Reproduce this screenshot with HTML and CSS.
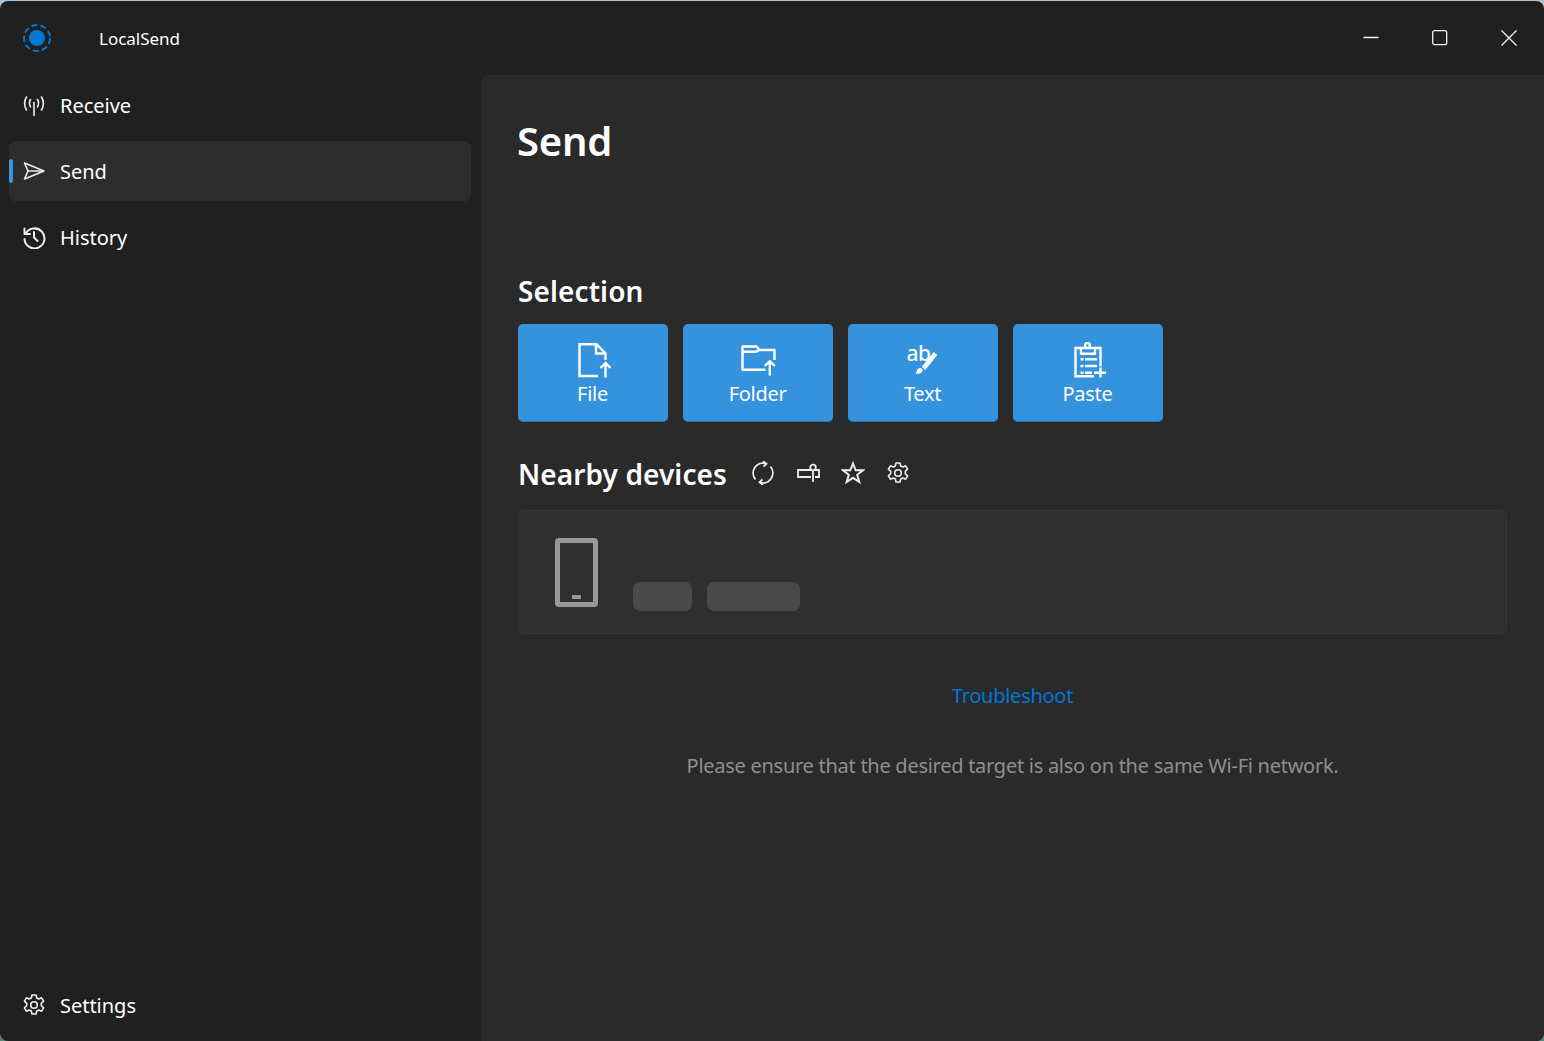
FILE: index.html
```html
<!DOCTYPE html>
<html lang="en">
<head>
<meta charset="utf-8">
<title>LocalSend</title>
<link rel="stylesheet" href="styles.css">
</head>
<body>
<div class="window">
  <header class="titlebar">
    <div class="brand">
      <svg class="logo" width="30" height="30" viewBox="0 0 30 30"><circle cx="15" cy="15" r="13" fill="none" stroke="#0078d4" stroke-width="2" stroke-dasharray="6 3.2"/><circle cx="15" cy="15" r="8" fill="#0078d4"/></svg>
      <span class="app-name">LocalSend</span>
    </div>
    <div class="controls">
      <svg width="16" height="16" viewBox="0 0 16 16" class="ctl"><path d="M0.500 7.500H15.500" stroke="#f2f2f2" stroke-width="1.300" fill="none"/></svg>
      <svg width="16" height="16" viewBox="0 0 16 16" class="ctl"><rect x="0.700" y="0.700" width="14" height="14" rx="2" stroke="#f2f2f2" stroke-width="1.300" fill="none"/></svg>
      <svg width="16" height="16" viewBox="0 0 16 16" class="ctl"><path d="M0.500 0.500L15.500 15.500M15.500 0.500L0.500 15.500" stroke="#f2f2f2" stroke-width="1.300" fill="none"/></svg>
    </div>
  </header>
  <div class="body">
    <nav class="sidebar">
      <div class="nav-top">
        <a class="nav-item">
          <svg class="nav-icon" width="24" height="24" viewBox="0 0 24 24" fill="none" stroke="#eee" stroke-width="1.600" stroke-linecap="round"><path d="M12 9.500V22.500"/><path d="M8.500 6.500c-1.400 2.400-1.400 5 0 7.400"/><path d="M15.500 6.500c1.400 2.400 1.400 5 0 7.400"/><path d="M4.500 4c-2.400 4-2.400 8.800 0 13"/><path d="M19.500 4c2.400 4 2.400 8.800 0 13"/></svg>
          <span>Receive</span>
        </a>
        <a class="nav-item active">
          <svg class="nav-icon" width="24" height="24" viewBox="0 0 24 24" fill="none" stroke="#eee" stroke-width="1.600" stroke-linejoin="round"><path d="M2.500 4L22 12L2.500 20L6 12Z"/><path d="M6 12H22"/></svg>
          <span>Send</span>
        </a>
        <a class="nav-item">
          <svg class="nav-icon" width="24" height="24" viewBox="0 0 24 24" fill="none" stroke="#eee" stroke-width="2" stroke-linecap="round" stroke-linejoin="round"><path d="M3.500 9A10 10 0 1 1 2.500 14"/><path d="M2.500 3.500V9H8"/><path d="M12 7V12.500L15.500 16"/></svg>
          <span>History</span>
        </a>
      </div>
      <a class="nav-item settings">
        <svg class="nav-icon" width="24" height="24" viewBox="0 0 24 24" fill="none" stroke="#eee" stroke-width="1.600" stroke-linejoin="round"><path d="M10 2h4l.7 3 2.100 1 2.800-1.200 2 3.400-2.300 2.100v2.400l2.300 2.100-2 3.400-2.800-1.200-2.100 1-.7 3h-4l-.7-3-2.100-1-2.800 1.200-2-3.400 2.300-2.100v-2.400L2.400 8.200l2-3.400 2.800 1.200 2.100-1z"/><circle cx="12" cy="12" r="3.300"/></svg>
        <span>Settings</span>
      </a>
    </nav>
    <main class="content">
      <h1 class="page-title">Send</h1>
      <h2 class="section-title selection">Selection</h2>
      <div class="buttons">
        <button class="pick">
          <svg width="36" height="36" viewBox="0 0 36 36" fill="none" stroke="#fff" stroke-width="2.400"><path d="M23 34H4.500V2.200H21.500L30.500 11.500V18"/><path d="M21 2.200V11.500H30.500"/><path d="M30.500 35.500V21M25.500 26L30.500 21L35.500 26"/></svg>
          <span>File</span>
        </button>
        <button class="pick">
          <svg width="36" height="36" viewBox="0 0 36 36" fill="none" stroke="#fff" stroke-width="2.400" stroke-linejoin="round"><path d="M25.500 27.700H2.500V4.500H16.500L19.500 8H34.500V18"/><path d="M2.500 9.700H16L19.500 8"/><path d="M29.800 33.500V19M24.800 24L29.800 19L34.800 24"/></svg>
          <span>Folder</span>
        </button>
        <button class="pick">
          <svg class="ab-icon" width="36" height="36" viewBox="0 0 36 36" fill="none" stroke="#fff"><path d="M18.500 26.500L30.500 11.500" stroke-width="4.600"/><path d="M16 26c-3 0-4.500 1.500-5 6 3 0 6-1 7-3.500z" fill="#fff" stroke="none"/><text x="1.500" y="19" class="ab">ab</text></svg>
          <span>Text</span>
        </button>
        <button class="pick">
          <svg width="36" height="36" viewBox="0 0 36 36" fill="none" stroke="#fff" stroke-width="2.400"><path d="M24 34.200H5.500V6H10.500M25.500 6H30.500V24.500"/><path d="M11 6H25V11.800H11Z"/><circle cx="17.500" cy="3.500" r="2.500"/><path d="M10.500 17.300H13.500M15 17.300H27M10.500 24H13.500M15 24H27M10.500 30.700H13.500M15 30.700H22"/><path d="M30.500 25.500V35.500M24 30.700H36"/></svg>
          <span>Paste</span>
        </button>
      </div>
      <div class="nearby-head">
        <h2 class="section-title">Nearby devices</h2>
        <div class="tools">
          <svg width="24" height="24" viewBox="0 0 24 24" fill="none" stroke="#eee" stroke-width="1.800"><path d="M4.500 18.500A10 10 0 0 1 15 2.500"/><path d="M12 0L15.500 2.800L12.500 5.500"/><path d="M19.500 5.500A10 10 0 0 1 9 21.500"/><path d="M12 24L8.500 21.200L11.500 18.500"/></svg>
          <svg width="24" height="24" viewBox="0 0 24 24" fill="none" stroke="#eee" stroke-width="1.800"><path d="M15 9H2V16H15M19 9H23V16H19"/><circle cx="17" cy="6.500" r="2.800"/><path d="M17 9.500V21"/></svg>
          <svg width="24" height="24" viewBox="0 0 24 24" fill="none" stroke="#eee" stroke-width="2" stroke-linejoin="miter"><path d="M12 2.500L14.700 9.300H22L16.200 13.800L18.300 21L12 16.800L5.700 21L7.800 13.800L2 9.300H9.300Z"/></svg>
          <svg width="24" height="24" viewBox="0 0 24 24" fill="none" stroke="#eee" stroke-width="1.600" stroke-linejoin="round"><path d="M10 2h4l.7 3 2.100 1 2.800-1.200 2 3.400-2.300 2.100v2.400l2.300 2.100-2 3.400-2.800-1.200-2.100 1-.7 3h-4l-.7-3-2.100-1-2.800 1.200-2-3.400 2.300-2.100v-2.400L2.400 8.200l2-3.400 2.800 1.200 2.100-1z"/><circle cx="12" cy="12" r="3.300"/></svg>
        </div>
      </div>
      <section class="device-card">
        <div class="phone"><i class="phone-btn"></i></div>
        <div class="chips">
          <span class="chip chip-a"></span>
          <span class="chip chip-b"></span>
        </div>
      </section>
      <a class="troubleshoot">Troubleshoot</a>
      <p class="hint">Please ensure that the desired target is also on the same Wi-Fi network.</p>
    </main>
  </div>
</div>
</body>
</html>
```

FILE: styles.css
```css
* { box-sizing: border-box; }
html, body { margin: 0; height: 100%; }
body {
  width: 1544px;
  height: 1041px;
  overflow: hidden;
  background: linear-gradient(#a6c5dc 0, #8fb4c8 50%, #4f8a7a 100%);
  font-family: "Noto Sans", "Open Sans", sans-serif;
  color: #fff;
}
.window {
  width: 1544px;
  height: 1040px;
  margin-top: 1px;
  background: #202020;
  border-radius: 8px;
  display: flex;
  flex-direction: column;
  overflow: hidden;
}
.titlebar {
  height: 74px;
  flex: none;
  display: flex;
  align-items: flex-start;
  justify-content: space-between;
}
.brand { display: flex; align-items: flex-start; padding: 21.500px 0 0 22px; }
.logo { display: block; }
.app-name { margin-left: 47px; padding-top: 1.500px; font-size: 17px; letter-spacing: -0.020px; line-height: 30px; }
.controls { display: flex; gap: 53px; padding: 29px 27px 0 0; }
.ctl { display: block; }
.body { flex: 1; display: flex; min-height: 0; }
.sidebar {
  width: 481px;
  flex: none;
  padding: 0 10px 6px 9px;
  display: flex;
  flex-direction: column;
  justify-content: space-between;
}
.nav-top { display: flex; flex-direction: column; gap: 6px; }
.nav-item {
  height: 60px;
  border-radius: 6px;
  display: flex;
  align-items: center;
  padding-left: 13px;
  gap: 14px;
  font-size: 20px;
  letter-spacing: -0.020px;
  position: relative;
}
.nav-icon { flex: none; }
.active { background: #2d2d2d; }
.active::before {
  content: "";
  position: absolute;
  left: 0;
  top: 18px;
  width: 4px;
  height: 24px;
  border-radius: 2px;
  background: #3794de;
}
.content {
  flex: 1;
  background: #2a2a2a;
  border-top-left-radius: 8px;
  padding: 32px 37px 0;
  min-width: 0;
}
.page-title { margin: 0 0 0 -1px; font-size: 40px; line-height: 68px; font-weight: 600; letter-spacing: -0.250px; }
.section-title { margin: 0; font-size: 28px; line-height: 40px; font-weight: 600; letter-spacing: 0.100px; }
.selection { margin-top: 96px; }
.buttons { display: flex; gap: 15px; margin: 13px 0 0 -0.500px; }
.pick {
  width: 150px;
  height: 98px;
  padding: 17px 0 0;
  background: #3592dc;
  border: 1px solid #3a8fd4;
  border-bottom-color: #2f74ad;
  border-radius: 5px;
  color: #fff;
  font-family: inherit;
  font-size: 20px;
  letter-spacing: -0.300px;
  display: flex;
  flex-direction: column;
  align-items: center;
}
.pick svg { display: block; flex: none; }
.pick .ab-icon { overflow: visible; }
.pick span { line-height: 26px; margin-top: 3px; }
.ab { font-family: "Noto Sans", sans-serif; font-size: 21px; fill: #fff; stroke: none; font-weight: 500; letter-spacing: -0.600px; }
.nearby-head { display: flex; align-items: center; margin-top: 32px; height: 40px; }
.tools { display: flex; gap: 21px; margin-left: 24.500px; position: relative; top: -1px; }
.tools svg { display: block; }
.device-card {
  margin-top: 16px;
  height: 124px;
  background: #2f2f2f;
  border: 1px solid #363636;
  border-radius: 6px;
  display: flex;
  padding: 27px 0 0 36px;
}
.phone {
  width: 43px;
  height: 69px;
  border: 5px solid #989898;
  border-radius: 4px;
  position: relative;
}
.phone-btn {
  position: absolute;
  left: 12px;
  bottom: 3px;
  width: 9px;
  height: 4.500px;
  background: #989898;
}
.chips { display: flex; gap: 15px; margin: 44px 0 0 35px; }
.chip { height: 29px; border-radius: 7px; background: #4a4a4a; }
.chip-a { width: 59px; }
.chip-b { width: 93px; }
.troubleshoot {
  display: block;
  text-align: center;
  margin-top: 44px;
  font-size: 20px;
  line-height: 36px;
  letter-spacing: -0.270px;
  color: #0078d4;
}
.hint {
  margin: 34px 0 0;
  text-align: center;
  font-size: 20px;
  line-height: 36px;
  letter-spacing: -0.270px;
  color: #8f8f8f;
}
```
